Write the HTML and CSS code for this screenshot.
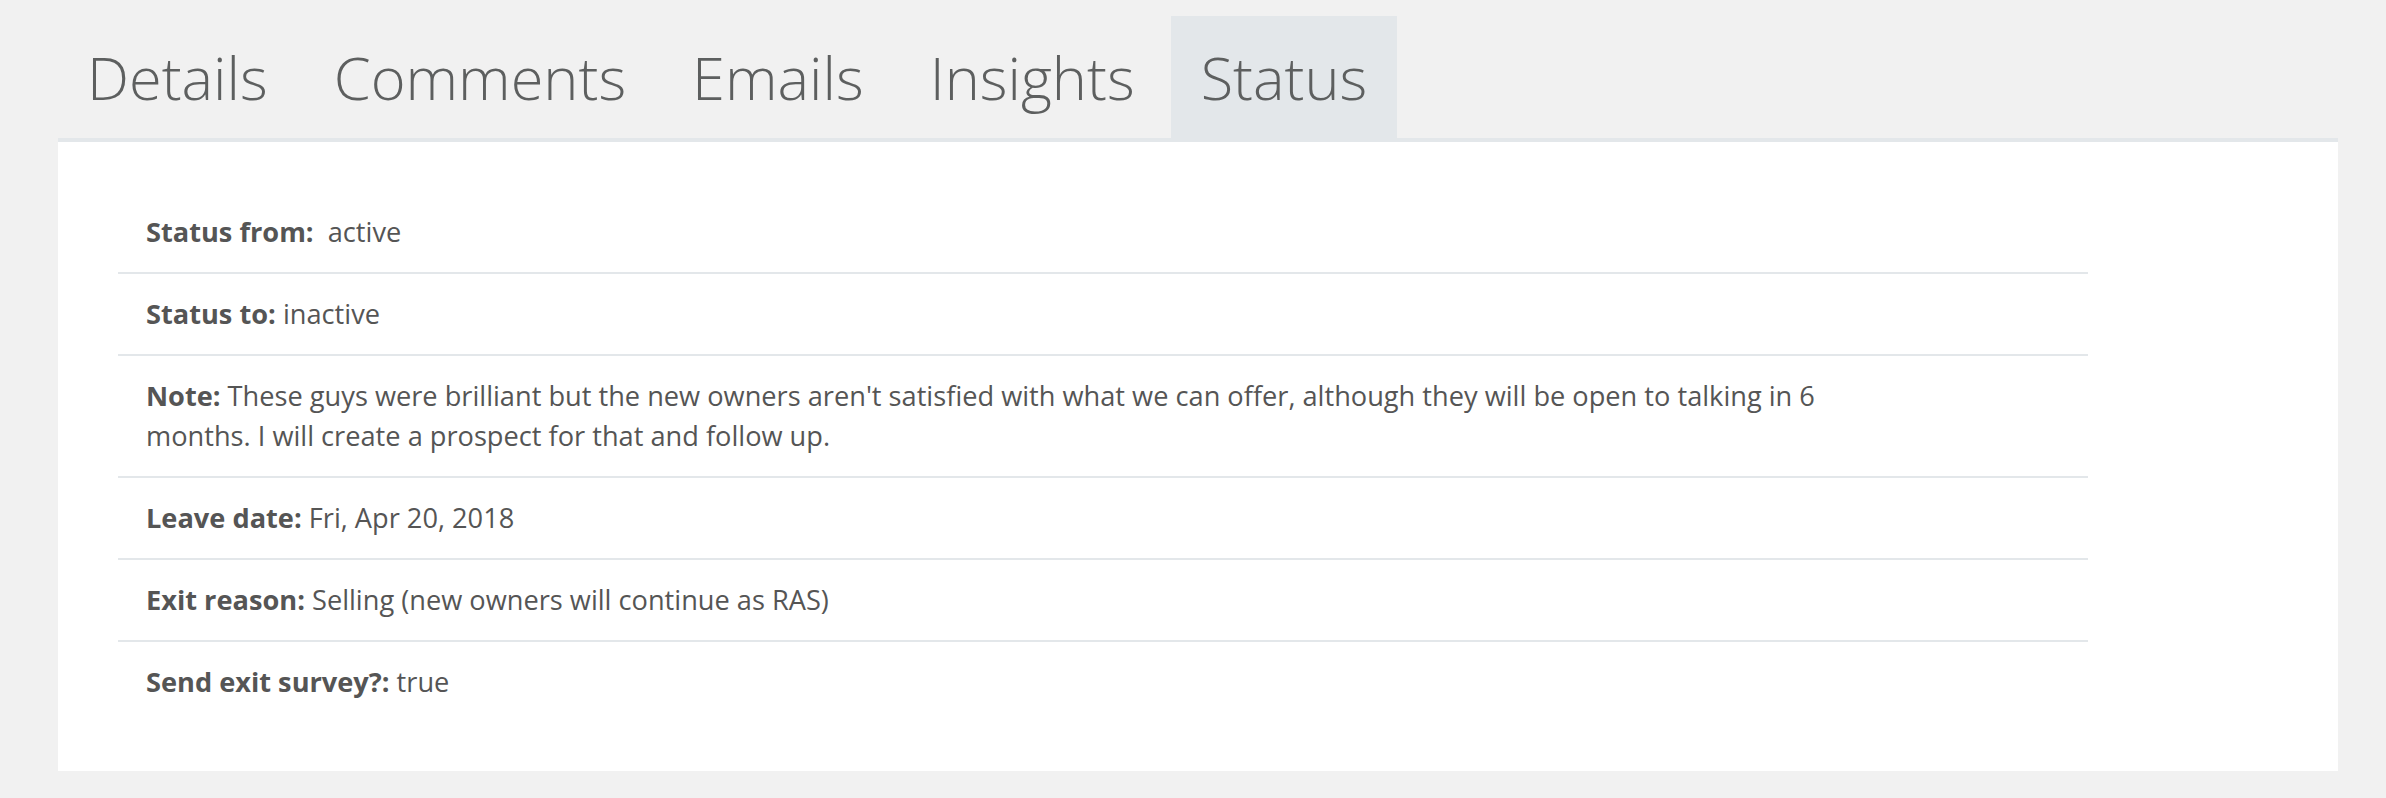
FILE: index.html
```html
<!DOCTYPE html>
<html lang="en">
<head>
<meta charset="utf-8">
<title>Status</title>
<link rel="stylesheet" href="styles.css">
</head>
<body>
<div class="page">
  <nav class="tabs">
    <div class="tab">Details</div>
    <div class="tab">Comments</div>
    <div class="tab">Emails</div>
    <div class="tab">Insights</div>
    <div class="tab active">Status</div>
  </nav>
  <section class="card">
    <div class="list">
      <div class="row"><div class="text"><b>Status from:</b>&nbsp; active</div></div>
      <div class="row"><div class="text"><b>Status to:</b> inactive</div></div>
      <div class="row"><div class="text"><b>Note:</b> These guys were brilliant but the new owners aren't satisfied with what we can offer, although they will be open to talking in 6 months. I will create a prospect for that and follow up.</div></div>
      <div class="row"><div class="text"><b>Leave date:</b> Fri, Apr 20, 2018</div></div>
      <div class="row"><div class="text"><b>Exit reason:</b> Selling (new owners will continue as RAS)</div></div>
      <div class="row"><div class="text"><b>Send exit survey?:</b> true</div></div>
    </div>
  </section>
</div>
</body>
</html>
```

FILE: styles.css
```css
html, body {
  margin: 0;
  padding: 0;
  background: #f1f1f1;
}
body {
  font-family: "Open Sans", "Liberation Sans", sans-serif;
  color: #555;
}
.page {
  padding: 16px 48px 0 58px;
}
.tabs {
  display: flex;
  gap: 6px;
}
.tab {
  font-weight: 300;
  font-size: 59.5px;
  line-height: 122px;
  padding: 0 30px;
  color: #5d5f5f;
}
.tab:first-child {
  padding-left: 29px;
}
.tab.active {
  background: #e3e7ea;
}
.card {
  background: #fff;
  border-top: 4px solid #e3e7ea;
  padding: 50px 60px 49px;
}
.list {
  width: 1970px;
}
.row {
  padding: 20px 28px;
  border-bottom: 2px solid #e3e7ea;
  font-size: 27.2px;
  line-height: 40px;
}
.row:last-child {
  border-bottom: none;
}
.text {
  max-width: 1720px;
}
.text b {
  font-weight: 700;
}
```
